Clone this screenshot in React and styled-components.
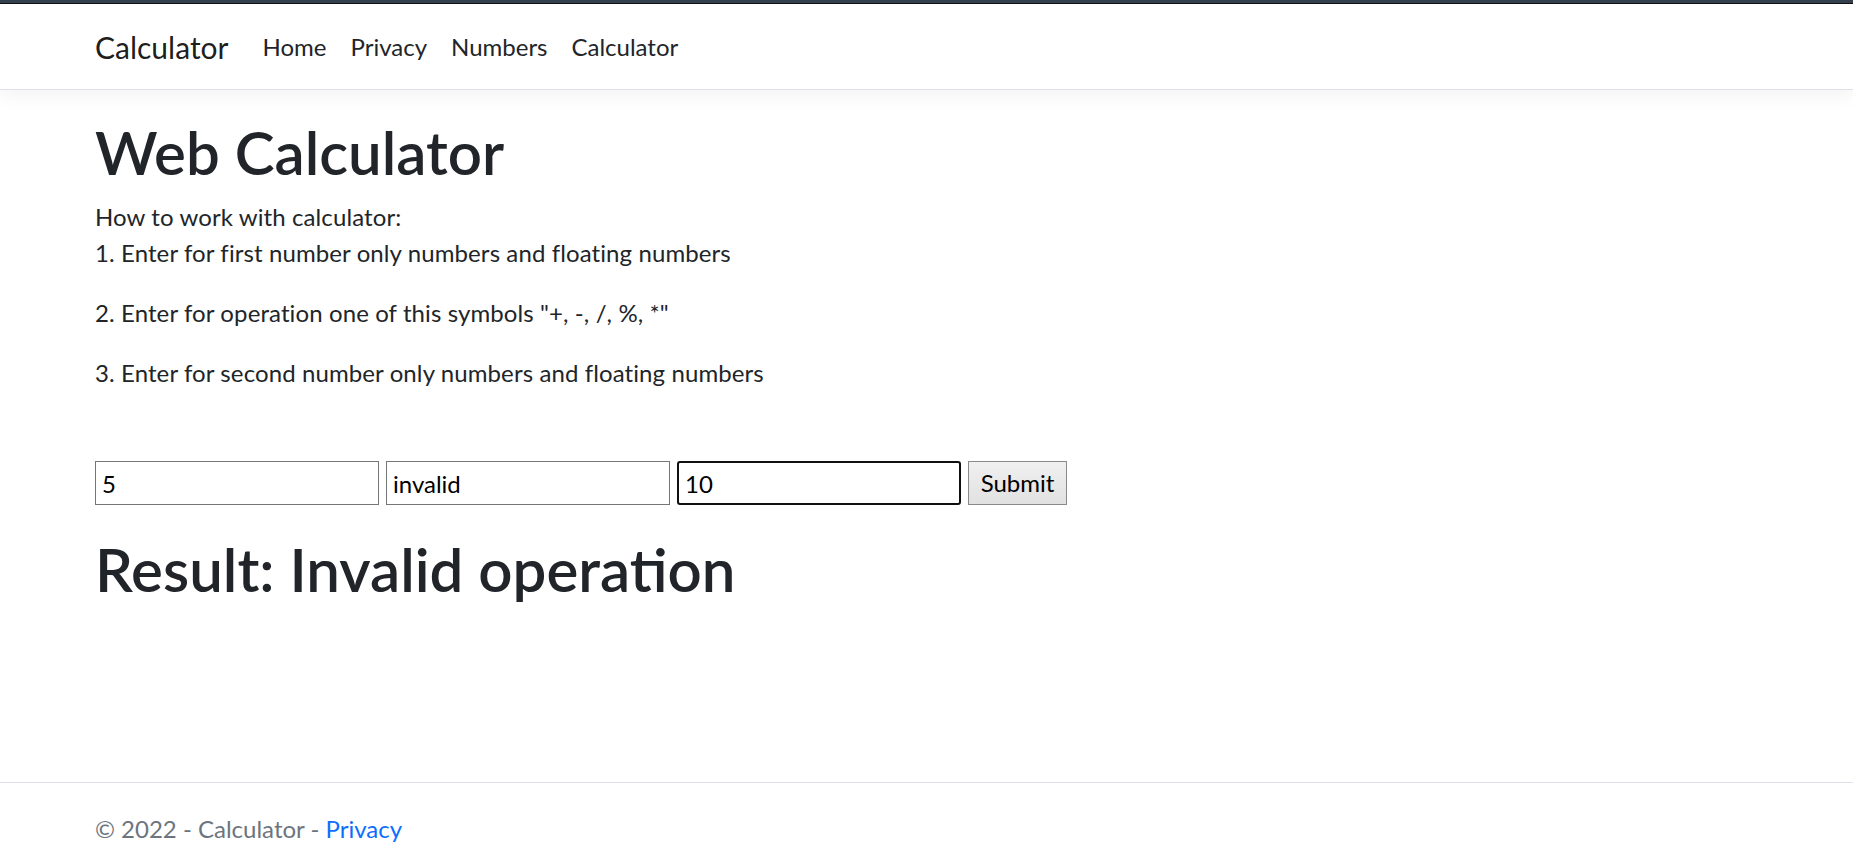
import React, { useState } from 'react';
import styled, { createGlobalStyle } from 'styled-components';

const GlobalStyle = createGlobalStyle`
  html, body {
    margin: 0;
    padding: 0;
    background: #fff;
  }
  body {
    font-family: Lato, "Noto Sans", "Liberation Sans", sans-serif;
    font-size: 24px;
    line-height: 1.5;
    color: #212529;
  }
  * {
    box-sizing: border-box;
  }
`;

const Page = styled.div`
  position: relative;
  min-height: 868px;
  display: flex;
  flex-direction: column;
`;

const WindowEdge = styled.div`
  height: 4px;
  background: #35404e;
  border-bottom: 1px solid #111;
`;

const Navbar = styled.header`
  height: 86px;
  border-bottom: 1px solid #dee2e6;
  box-shadow: 0 6px 18px rgba(0, 0, 0, 0.05);
  background: #fff;
`;

const Container = styled.div`
  padding: 0 95px;
`;

const NavInner = styled(Container)`
  height: 100%;
  display: flex;
  align-items: center;
`;

const Brand = styled.a`
  font-size: 30px;
  color: rgba(0, 0, 0, 0.9);
  text-decoration: none;
  margin-right: 22px;
  line-height: 45px;
  padding-top: 2px;
`;

const NavList = styled.nav`
  display: flex;
`;

const NavLink = styled.a`
  font-size: 24px;
  color: #212529;
  text-decoration: none;
  padding: 0 12px;
  line-height: 36px;
`;

const Main = styled(Container)`
  flex: 1;
  padding-top: 26px;
`;

const Title = styled.h1`
  font-size: 60px;
  font-weight: 600;
  line-height: 1.2;
  margin: 0 0 11px;
`;

const Text = styled.p`
  margin: 0 0 ${(p) => (p.$gap ? '24px' : '0')};
  letter-spacing: 0.1px;
`;

const CalcForm = styled.form`
  display: flex;
  gap: 7px;
  margin-top: 70px;
`;

const Field = styled.input`
  width: 284px;
  height: 44px;
  padding: 0 6px;
  font: inherit;
  font-size: 24px;
  color: #000;
  background: #fff;
  border: ${(p) => (p.$focused ? '2px solid #101010' : '1px solid #767676')};
  border-radius: ${(p) => (p.$focused ? '3px' : '0')};
  outline: none;
`;

const SubmitButton = styled.button`
  width: 99px;
  height: 44px;
  padding: 0;
  font: inherit;
  font-size: 24px;
  color: #000;
  background: linear-gradient(#f0f0f0, #e1e1e1);
  border: 1px solid #8a8a8a;
  border-radius: 0;
`;

const Result = styled(Title)`
  margin-top: 28px;
`;

const Footer = styled.footer`
  height: 86px;
  padding-top: 6px;
  border-top: 1px solid #dee2e6;
  line-height: 80px;
  font-size: 24px;
  color: #6c757d;
`;

const FooterLink = styled.a`
  color: #0d6efd;
  text-decoration: none;
`;

export default function App() {
  const [first, setFirst] = useState('5');
  const [op, setOp] = useState('invalid');
  const [second, setSecond] = useState('10');

  return (
    <Page>
      <GlobalStyle />
      <WindowEdge />
      <Navbar>
        <NavInner>
          <Brand href="#">Calculator</Brand>
          <NavList>
            <NavLink href="#">Home</NavLink>
            <NavLink href="#">Privacy</NavLink>
            <NavLink href="#">Numbers</NavLink>
            <NavLink href="#">Calculator</NavLink>
          </NavList>
        </NavInner>
      </Navbar>
      <Main>
        <Title>Web Calculator</Title>
        <Text>How to work with calculator:</Text>
        <Text $gap>1. Enter for first number only numbers and floating numbers</Text>
        <Text $gap>2. Enter for operation one of this symbols "+, -, /, %, *"</Text>
        <Text $gap>3. Enter for second number only numbers and floating numbers</Text>
        <CalcForm onSubmit={(e) => e.preventDefault()}>
          <Field value={first} onChange={(e) => setFirst(e.target.value)} />
          <Field value={op} onChange={(e) => setOp(e.target.value)} />
          <Field $focused value={second} onChange={(e) => setSecond(e.target.value)} />
          <SubmitButton type="submit">Submit</SubmitButton>
        </CalcForm>
        <Result>Result: Invalid operation</Result>
      </Main>
      <Footer>
        <Container>
          © 2022 - Calculator - <FooterLink href="#">Privacy</FooterLink>
        </Container>
      </Footer>
    </Page>
  );
}
